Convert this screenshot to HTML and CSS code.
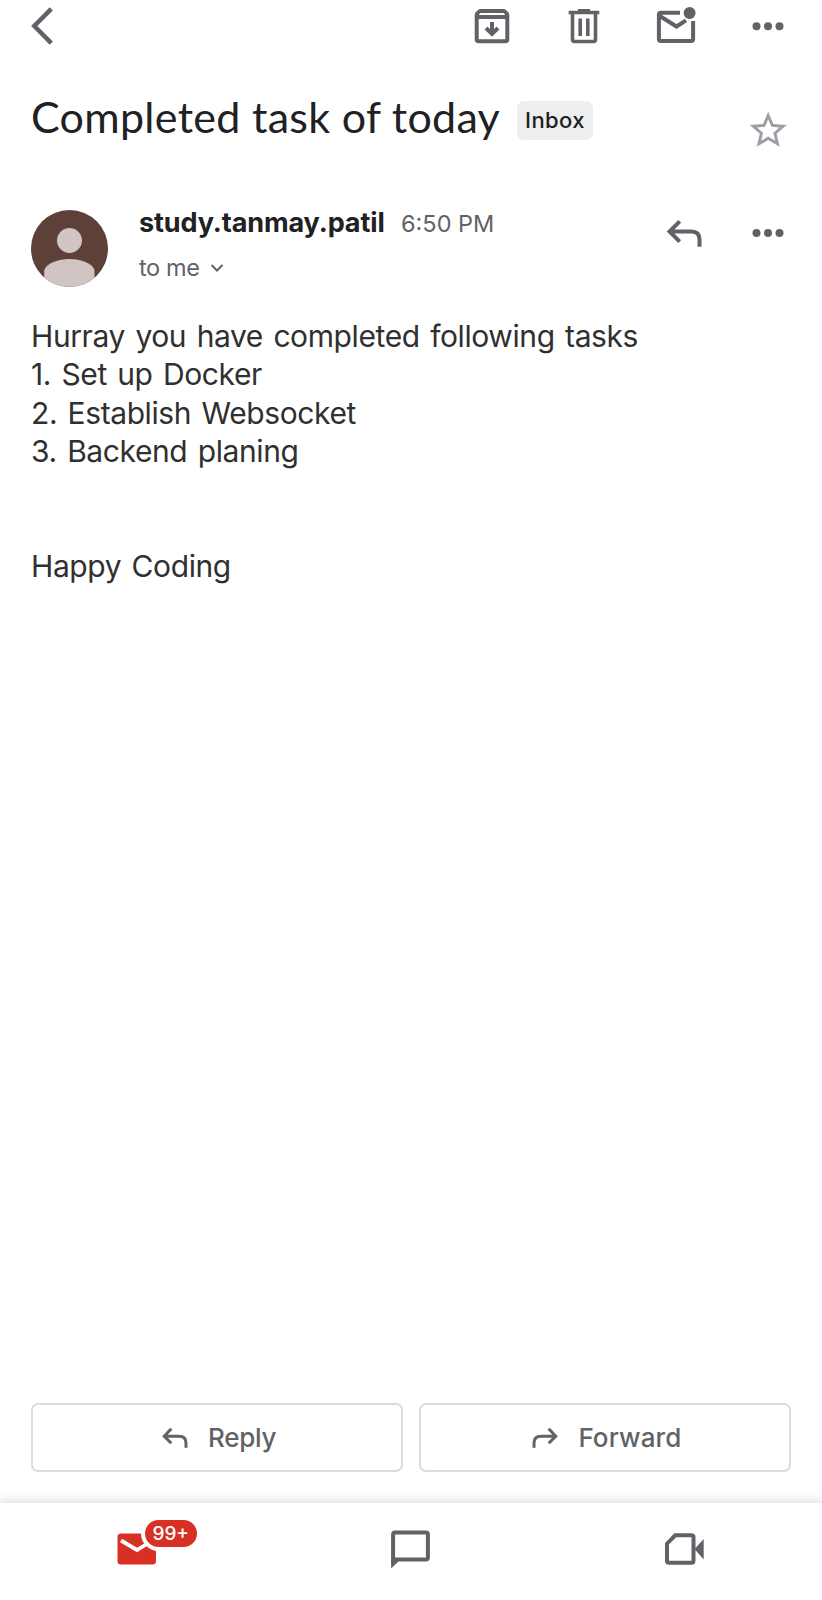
FILE: index.html
```html
<!DOCTYPE html>
<html lang="en">
<head>
<meta charset="utf-8">
<meta name="viewport" content="width=device-width">
<title>Completed task of today</title>
<link rel="stylesheet" href="styles.css">
</head>
<body>
<div class="app">
  <header class="toolbar">
    <svg class="icon back" viewBox="0 0 44 44"><path class="line" d="M21.300 4.800 4.300 22 21.300 39.200"/></svg>
    <div class="actions">
      <svg class="icon" viewBox="0 0 44 44"><path class="line" d="M6.700 12.500V11.200Q6.700 10.200 7.600 9.200L9.200 7.600Q10 6.900 11 6.900H33Q34 6.900 34.800 7.600L36.400 9.200Q37.300 10.200 37.300 11.200V35.200Q37.300 37.300 35.200 37.300H8.800Q6.700 37.300 6.700 35.200ZM6.700 13h30.600"/><path class="line" d="M22 18v12M16 24l6 6 6-6"/></svg>
      <svg class="icon" viewBox="0 0 44 44"><path class="line thin" d="M6.600 8.500h30.700M10.500 9v26.500q0 2 2 2h19q2 0 2-2V9M18.200 14.500v17.500M25.800 14.500v17.500"/><path class="fill" d="M16 5h12v3H16z"/></svg>
      <svg class="icon" viewBox="0 0 44 44"><path class="line" d="M26 8.700H7q-2.100 0-2.100 2v24.400q0 2 2 2h30.200q2 0 2-2V17M5 11.500l17.500 11 9.500-6.200"/><circle class="fill" cx="35.600" cy="8.900" r="6"/></svg>
      <svg class="icon" viewBox="0 0 44 44"><circle class="fill" cx="10.500" cy="22.300" r="4"/><circle class="fill" cx="22" cy="22.300" r="4"/><circle class="fill" cx="33.500" cy="22.300" r="4"/></svg>
    </div>
  </header>

  <section class="subject">
    <h1 class="title">Completed task of today</h1>
    <span class="chip">Inbox</span>
    <svg class="star" viewBox="0 0 24 24"><path d="M22 9.240l-7.190-.62L12 2 9.190 8.630 2 9.240l5.460 4.730L5.820 21 12 17.270 18.180 21l-1.630-7.030L22 9.240zM12 15.400l-3.760 2.270 1-4.280-3.320-2.880 4.380-.38L12 6.100l1.710 4.040 4.380.38-3.320 2.880 1 4.280L12 15.400z"/></svg>
  </section>

  <section class="sender">
    <svg class="avatar" viewBox="0 0 77 77"><defs><clipPath id="disc"><circle cx="38.500" cy="38.500" r="38.500"/></clipPath></defs><g clip-path="url(#disc)"><path fill="#5d4037" d="M0 0h77v77H0z"/><circle cx="38.500" cy="30.500" r="12.500" fill="#d0c5c2"/><path fill="#d0c5c2" d="M13.200 77V60C16 53 27 49 38.500 49S61 53 63.500 60v17z"/></g></svg>
    <div class="who">
      <div class="from"><span class="name">study.tanmay.patil</span><span class="time">6:50 PM</span></div>
      <div class="to"><span class="me">to me</span><svg class="caret" viewBox="0 0 14 10"><path d="M1.500 2 7 7.500 12.500 2"/></svg></div>
    </div>
    <div class="sender-actions">
      <svg class="icon" viewBox="0 0 44 44"><path class="line" d="M17.700 10.300 7.500 20.500l10.200 10.200M8 20.500H29.500q8 0 8 8V35.700"/></svg>
      <svg class="icon" viewBox="0 0 44 44"><circle class="fill" cx="10.500" cy="22" r="4"/><circle class="fill" cx="22" cy="22" r="4"/><circle class="fill" cx="33.500" cy="22" r="4"/></svg>
    </div>
  </section>

  <main class="message">
    <p>Hurray you have completed following tasks</p>
    <p>1. Set up Docker</p>
    <p>2. Establish Websocket</p>
    <p>3. Backend planing</p>
    <p class="signoff">Happy Coding</p>
  </main>

  <div class="replies">
    <button class="reply"><svg class="arrow" viewBox="0 0 26 22"><path d="M9.300 1.800 2.200 9.200l7.100 7.100M2.500 9.200H17q7 0 7 6.800V20.800"/></svg><span>Reply</span></button>
    <button class="reply forward"><svg class="arrow" viewBox="0 0 26 22"><path d="M16.700 1.800 23.800 9.200l-7.100 7.100M23.500 9.200H9q-7 0-7 6.800V20.800"/></svg><span>Forward</span></button>
  </div>

  <nav class="tabs">
    <div class="tab"><div class="mail">
      <svg class="tab-icon" viewBox="0 0 44 44"><rect x="2.500" y="6.500" width="38.500" height="31" rx="3.500" fill="#d93025"/><path d="M6 13.500 22 23l13-8" fill="none" stroke="#fff" stroke-width="3.800"/></svg>
      <span class="badge">99+</span>
    </div></div>
    <div class="tab"><svg class="tab-icon" viewBox="0 0 44 44"><path class="line" d="M4.100 36.500V7.500q0-2 2-2h30.800q2 0 2 2v23q0 2-2 2H6"/><path class="fill" d="M2.100 31v10.500L10 34V31z"/></svg></div>
    <div class="tab"><svg class="tab-icon" viewBox="0 0 44 44"><path class="line" d="M12.200 8.300H28.500q2 0 2 2v23.400q0 2-2 2H6q-2 0-2-2V16.700Z"/><path class="fill" d="M31.500 22l9.200-10v20.500z"/></svg></div>
  </nav>
</div>
</body>
</html>
```
FILE: styles.css
```css
* { box-sizing: border-box; }
body { margin: 0; background: #fff; font-family: Inter, sans-serif; }
h1, p { margin: 0; font-weight: 400; }
svg { display: block; flex: none; }

.app { width: 822px; height: 1600px; display: flex; flex-direction: column; overflow: hidden; }
.icon { width: 44px; height: 44px; }
.line { fill: none; stroke: #5f6368; stroke-width: 4; }
.thin { stroke-width: 3.600; }
.back .line { stroke-width: 4.500; }
.fill { fill: #5f6368; }

.toolbar { height: 92px; padding: 4.3px 31.700px 0 30px; display: flex; justify-content: space-between; align-items: flex-start; }
.actions { display: flex; gap: 48.200px; }

.subject { height: 118px; padding: 0 31.500px 0 31px; display: flex; align-items: flex-start; white-space: nowrap; }
.title { width: 486px; margin-top: -2px; font: 400 43px/54px Lato, sans-serif; letter-spacing: 0.300px; color: #202124; }
.chip { width: 76px; height: 38.500px; margin-top: 9px; border-radius: 7px; background: #eee; color: #202124; font-size: 22px; font-weight: 500; letter-spacing: 0.400px; line-height: 38px; text-align: center; }
.star { width: 44.400px; height: 44.400px; margin: 15.800px 0 0 auto; fill: #9aa0a6; }

.sender { height: 107px; padding: 0 31.700px 0 31px; display: flex; align-items: flex-start; white-space: nowrap; }
.avatar { width: 77px; height: 77px; }
.who { margin-left: 31px; padding-top: 1px; }
.from { height: 43.500px; display: flex; align-items: baseline; line-height: 24px; }
.name { width: 262px; font-size: 27px; font-weight: 700; letter-spacing: -0.100px; color: #202124; }
.time { font-size: 23.500px; color: #5f6368; }
.to { display: flex; align-items: center; line-height: 26px; color: #5f6368; font-size: 23.500px; }
.me { width: 71px; letter-spacing: -0.400px; }
.caret { width: 14px; height: 10px; margin-top: 1px; fill: none; stroke: #5f6368; stroke-width: 2; }
.sender-actions { display: flex; gap: 40px; margin-left: auto; padding-top: 1px; }

.message { flex: 1; padding: 0 31px; color: #303030; font-size: 30px; line-height: 38.400px; letter-spacing: -0.400px; word-spacing: 2.400px; white-space: nowrap; }
.signoff { margin-top: 76.800px; }

.replies { height: 100px; padding: 0 31px; display: flex; gap: 15.500px; }
.reply { flex: 1; height: 69px; padding: 0 0 0 4px; display: flex; justify-content: center; align-items: center; gap: 20px; border: 2px solid #dadce0; border-radius: 7px; background: #fff; color: #5f6368; font: 500 26px/34px Inter, sans-serif; letter-spacing: -0.300px; }
.forward { letter-spacing: 0.100px; }
.arrow { width: 26px; height: 22px; fill: none; stroke: #5f6368; stroke-width: 3; }

.tabs { height: 97px; display: flex; background: #fff; box-shadow: 0 -1px 10px rgba(0, 0, 0, .18); }
.tab { flex: 1; display: flex; justify-content: center; padding-top: 24px; }
.tab-icon { width: 44px; height: 44px; }
.mail { position: relative; height: 44px; }
.badge { position: absolute; left: 29.500px; top: -7px; width: 52.500px; height: 27px; border-radius: 14px; background: #d93025; box-shadow: 0 0 0 4px #fff; color: #fff; font-size: 19px; font-weight: 500; line-height: 27px; text-align: center; }
```
